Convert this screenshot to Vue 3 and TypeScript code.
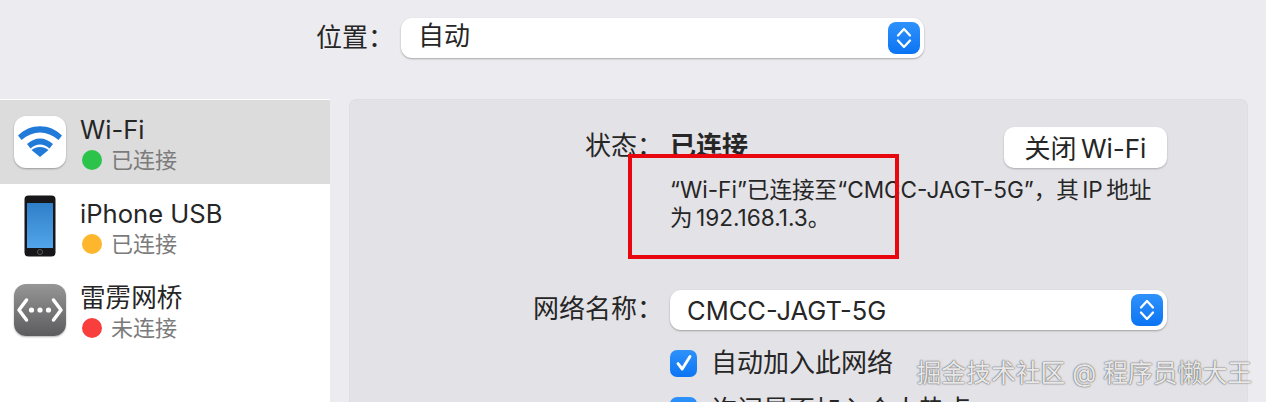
<script setup lang="ts">
const networks = [
  { name: 'Wi-Fi', status: '已连接', dot: '#2cc34a', icon: 'wifi', active: true },
  { name: 'iPhone USB', status: '已连接', dot: '#feb62c', icon: 'phone', active: false },
  { name: '雷雳网桥', status: '未连接', dot: '#f93e3e', icon: 'bridge', active: false },
]
</script>

<template>
  <div class="page">
    <header class="location">
      <span class="label">位置：</span>
      <div class="select location-select">
        <span class="cjk-lift">自动</span>
        <span class="stepper">
          <svg viewBox="0 0 18 26" width="18" height="26"><path d="M3 10.500 9 4l6 6.500M3 15.500 9 22l6-6.500" fill="none" stroke="#fff" stroke-width="2.300" stroke-linecap="round" stroke-linejoin="round" /></svg>
        </span>
      </div>
    </header>

    <div class="body">
      <aside class="sidebar">
        <div v-for="n in networks" :key="n.name" class="net" :class="{ active: n.active }">
          <div class="net-icon">
            <div v-if="n.icon === 'wifi'" class="tile tile-wifi">
              <svg viewBox="0 0 52 52" width="52" height="52">
                <path d="M4 19.500C16 7 36 7 48 19.500l-3.500 4.500C33 14 19 14 7.500 24Z" fill="#2179d8" />
                <path d="M13 28c8-7.500 18-7.500 26 0l-3.500 4.500c-6-5.300-13-5.300-19 0Z" fill="#2179d8" />
                <path d="M26 41 17.500 34c5-4 12-4 17 0Z" fill="#2179d8" />
              </svg>
            </div>
            <svg v-else-if="n.icon === 'phone'" viewBox="0 0 34 62" width="34" height="62">
              <rect x="1.500" y="0.500" width="31" height="61" rx="4" fill="#17171a" />
              <defs>
                <linearGradient id="screen" x1="0" y1="0" x2="0" y2="1">
                  <stop offset="0" stop-color="#2f7fc8" />
                  <stop offset="1" stop-color="#52a5ea" />
                </linearGradient>
              </defs>
              <rect x="4" y="8" width="26" height="45" fill="url(#screen)" />
              <circle cx="17" cy="57" r="2.500" fill="none" stroke="#555" />
            </svg>
            <div v-else class="tile tile-bridge">
              <svg viewBox="0 0 52 52" width="52" height="52">
                <path d="M12.500 16 5 26l7.500 10M39.500 16 47 26l-7.500 10" fill="none" stroke="#fff" stroke-width="3.500" stroke-linecap="round" stroke-linejoin="round" />
                <circle cx="17.500" cy="26" r="2.600" fill="#fff" />
                <circle cx="26" cy="26" r="2.600" fill="#fff" />
                <circle cx="34.500" cy="26" r="2.600" fill="#fff" />
              </svg>
            </div>
          </div>
          <div class="net-text">
            <div class="net-name">{{ n.name }}</div>
            <div class="net-status">
              <i class="dot" :style="{ background: n.dot }"></i>
              <span>{{ n.status }}</span>
            </div>
          </div>
        </div>
      </aside>

      <main class="panel">
        <div class="row status-row">
          <span class="row-label">状态：</span>
          <div class="row-main status-main">
            <strong class="status-value">已连接</strong>
            <button type="button" class="off-btn">关闭 Wi-Fi</button>
          </div>
        </div>
        <div class="row desc-row">
          <span class="row-label"></span>
          <p class="desc">“Wi-Fi”已连接至“CMCC-JAGT-5G”，其 IP 地址<br />为 192.168.1.3。</p>
        </div>
        <div class="row name-row">
          <span class="row-label">网络名称：</span>
          <div class="select name-select row-main">
            <span>CMCC-JAGT-5G</span>
            <span class="stepper">
              <svg viewBox="0 0 18 26" width="18" height="26"><path d="M3 10.500 9 4l6 6.500M3 15.500 9 22l6-6.500" fill="none" stroke="#fff" stroke-width="2.300" stroke-linecap="round" stroke-linejoin="round" /></svg>
            </span>
          </div>
        </div>
        <div class="row check-row">
          <span class="row-label"></span>
          <label class="check"><i class="box"><svg viewBox="0 0 20 20" width="24" height="24"><path d="M5 10.500 8.500 15 15 4.500" fill="none" stroke="#fff" stroke-width="2.400" stroke-linecap="round" stroke-linejoin="round" /></svg></i>自动加入此网络</label>
        </div>
        <div class="row check-row">
          <span class="row-label"></span>
          <label class="check"><i class="box"><svg viewBox="0 0 20 20" width="24" height="24"><path d="M5 10.500 8.500 15 15 4.500" fill="none" stroke="#fff" stroke-width="2.400" stroke-linecap="round" stroke-linejoin="round" /></svg></i>询问是否加入个人热点</label>
        </div>
      </main>
    </div>

    <div class="red-box"></div>
    <div class="watermark">掘金技术社区 @ 程序员懒大王</div>
  </div>
</template>

<style>
html, body {
  margin: 0;
  overflow: hidden;
}
</style>

<style scoped>
.page {
  position: relative;
  width: 1266px;
  height: 402px;
  overflow: hidden;
  background: #ecebef;
  color: #262626;
  font-family: Inter, "Noto Sans CJK SC", sans-serif;
  font-size: 26px;
}
.location {
  height: 99px;
  box-sizing: border-box;
  padding: 18px 0 0 316px;
  display: flex;
  align-items: flex-start;
}
.label {
  width: 85px;
  line-height: 40px;
  flex-shrink: 0;
}
.select {
  display: flex;
  align-items: center;
  justify-content: space-between;
  box-sizing: border-box;
  height: 40px;
  background: #fff;
  border-radius: 11px;
  box-shadow: 0 1px 2px rgba(0, 0, 0, 0.3);
  padding: 0 4px 0 17px;
}
.location-select {
  width: 523px;
}
.cjk-lift {
  line-height: 36px;
  margin-bottom: 4px;
}
.stepper {
  display: flex;
  align-items: center;
  justify-content: center;
  width: 32px;
  height: 32px;
  border-radius: 8px;
  background: linear-gradient(#2f92fb, #0b74f3);
}
.body {
  display: flex;
  gap: 19px;
}
.sidebar {
  width: 330px;
  height: 303px;
  padding-top: 1px;
  background: #fff;
  flex-shrink: 0;
}
.net {
  display: flex;
  height: 84px;
  box-sizing: border-box;
  padding-left: 14px;
  align-items: center;
}
.net.active {
  background: #dcdcdc;
}
.net-icon {
  width: 52px;
  height: 62px;
  display: flex;
  align-items: center;
  justify-content: center;
  margin-right: 14px;
}
.tile {
  width: 52px;
  height: 52px;
  border-radius: 12px;
  box-shadow: 0 1px 2px rgba(0, 0, 0, 0.3);
}
.tile-wifi {
  background: #fff;
}
.tile-bridge {
  background: linear-gradient(#969696, #5c5c5e);
}
.net-text {
  padding-top: 6px;
}
.net-name {
  font-size: 25.600px;
  line-height: 30px;
}
.net-status {
  display: flex;
  align-items: center;
  gap: 9px;
  font-size: 22px;
  line-height: 30px;
  color: #7b7b7b;
}
.dot {
  width: 20px;
  height: 20px;
  margin-left: 2px;
  border-radius: 50%;
}
.panel {
  width: 899px;
  height: 310px;
  box-sizing: border-box;
  background: #e3e2e6;
  border-radius: 8px 8px 0 0;
  box-shadow: inset 0 0 0 1px #dfdee2;
  padding-top: 28px;
}
.row {
  display: flex;
}
.row-label {
  width: 314px;
  margin-right: 7px;
  text-align: right;
  flex-shrink: 0;
  line-height: 37px;
}
.row-main {
  width: 497px;
}
.status-main {
  display: flex;
  justify-content: space-between;
  align-items: flex-start;
  height: 40px;
}
.status-value {
  line-height: 37px;
  font-weight: 700;
}
.off-btn {
  width: 163px;
  height: 41px;
  padding: 0 0 3px;
  border: none;
  border-radius: 10px;
  background: #fff;
  box-shadow: 0 1px 2px rgba(0, 0, 0, 0.25);
  font: inherit;
  font-size: 26px;
  word-spacing: -3px;
  color: #262626;
}
.desc-row {
  margin-top: 9px;
}
.desc {
  margin: 0;
  font-size: 22.600px;
  word-spacing: -3px;
  line-height: 28px;
  white-space: nowrap;
}
.name-row {
  margin-top: 58px;
}
.name-select {
  font-size: 25.500px;
}
.check-row {
  margin-top: 19px;
}
.check {
  display: flex;
  align-items: center;
  gap: 14px;
  line-height: 28px;
}
.box {
  display: flex;
  align-items: center;
  justify-content: center;
  width: 27px;
  height: 27px;
  border-radius: 7px;
  background: linear-gradient(#2f92fb, #0b74f3);
}
.red-box {
  position: absolute;
  left: 628px;
  top: 154px;
  width: 271px;
  height: 105px;
  box-sizing: border-box;
  border: 4px solid #e8060f;
}
.watermark {
  position: absolute;
  right: 14px;
  top: 358px;
  font-size: 24.800px;
  line-height: 30px;
  color: rgba(255, 255, 255, 0.9);
  text-shadow: 0 0 1px rgba(60, 60, 60, 0.9), 0 0 2px rgba(60, 60, 60, 0.6);
  white-space: nowrap;
}
</style>
